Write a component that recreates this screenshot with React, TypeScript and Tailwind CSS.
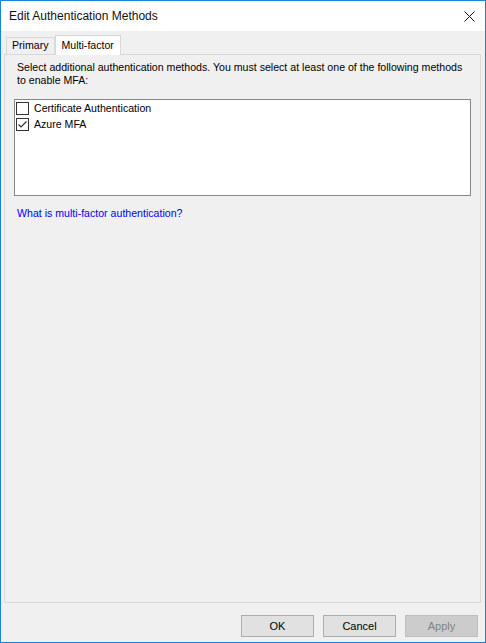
import React from 'react';

function CheckBox({ checked }: { checked?: boolean }) {
  return (
    <div className="w-[13px] h-[13px] border border-[#333333] bg-white flex items-center justify-center shrink-0">
      {checked && (
        <svg width="11" height="11" viewBox="0 0 11 11">
          <path d="M1.5 5.5 L4 8 L9.5 2.5" fill="none" stroke="#333333" strokeWidth="1.2" />
        </svg>
      )}
    </div>
  );
}

export default function App() {
  const font = { fontFamily: '"Liberation Sans", Arial, sans-serif' };

  return (
    <div className="w-[486px] h-[643px] border border-[#1883d7] flex flex-col bg-[#f0f0f0] text-[10.6px] text-black" style={font}>
      {/* Title bar */}
      <div className="h-[30px] bg-white flex items-center justify-between pl-[8px] pr-[10px] shrink-0">
        <span className="text-[12px] text-[#111]">Edit Authentication Methods</span>
        <svg width="11" height="11" viewBox="0 0 11 11">
          <path d="M0.5 0.5 L10.5 10.5 M10.5 0.5 L0.5 10.5" stroke="#111" strokeWidth="1" />
        </svg>
      </div>

      {/* Tabs */}
      <div className="flex-1 flex flex-col pl-[3px] pr-[4px] pt-[4px]">
        <div className="flex items-end h-[19px] pl-[2px] relative z-10">
          <div className="h-[17px] px-[5px] border border-b-0 border-[#d9d9d9] bg-[#f0f0f0] flex items-center">Primary</div>
          <div className="h-[20px] px-[6px] border border-b-0 border-[#d9d9d9] bg-white flex items-center -mb-[1px]">Multi-factor</div>
        </div>

        {/* Panel */}
        <div className="h-[549px] border border-[#d9d9d9] bg-[#f0f0f0] px-[9px] pt-[6px] flex flex-col">
          <p className="leading-[13px] pl-[3px] whitespace-nowrap">
            Select additional authentication methods. You must select at least one of the following methods
            <br />
            to enable MFA:
          </p>

          <div className="mt-[12px] h-[97px] border border-[#828790] bg-white pl-[1px] pt-[2px] flex flex-col gap-[3px]">
            <div className="flex items-center gap-[5px] leading-[13px]">
              <CheckBox />
              <span>Certificate Authentication</span>
            </div>
            <div className="flex items-center gap-[5px] leading-[13px]">
              <CheckBox checked />
              <span>Azure MFA</span>
            </div>
          </div>

          <a className="mt-[10px] pl-[3px] text-[#0000ff] cursor-pointer">What is multi-factor authentication?</a>
        </div>

        {/* Buttons */}
        <div className="flex justify-end gap-[9px] mt-[12px] pr-[3px]">
          <button className="w-[73px] h-[22px] border border-[#adadad] bg-[#e1e1e1] text-[11px]">OK</button>
          <button className="w-[73px] h-[22px] border border-[#adadad] bg-[#e1e1e1] text-[11px]">Cancel</button>
          <button className="w-[73px] h-[22px] border border-[#bfbfbf] bg-[#cccccc] text-[#838383] text-[11px]">Apply</button>
        </div>
      </div>
    </div>
  );
}
